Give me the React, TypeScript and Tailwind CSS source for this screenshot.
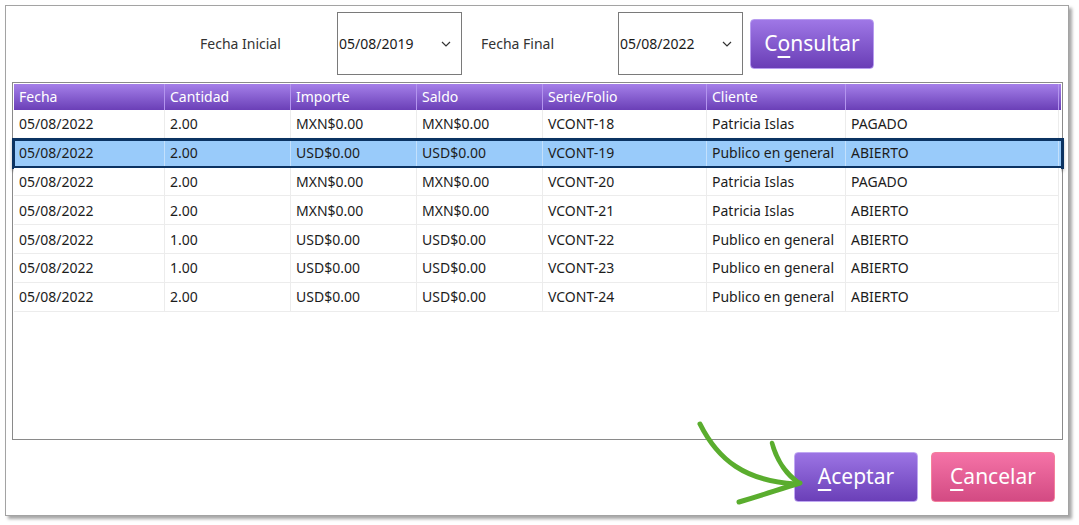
import React from "react";

const columns = [
  { label: "Fecha", w: "w-[151px]" },
  { label: "Cantidad", w: "w-[126px]" },
  { label: "Importe", w: "w-[126px]" },
  { label: "Saldo", w: "w-[126px]" },
  { label: "Serie/Folio", w: "w-[164px]" },
  { label: "Cliente", w: "w-[139px]" },
  { label: "", w: "w-[213px]" },
];

const rows = [
  ["05/08/2022", "2.00", "MXN$0.00", "MXN$0.00", "VCONT-18", "Patricia Islas", "PAGADO"],
  ["05/08/2022", "2.00", "USD$0.00", "USD$0.00", "VCONT-19", "Publico en general", "ABIERTO"],
  ["05/08/2022", "2.00", "MXN$0.00", "MXN$0.00", "VCONT-20", "Patricia Islas", "PAGADO"],
  ["05/08/2022", "2.00", "MXN$0.00", "MXN$0.00", "VCONT-21", "Patricia Islas", "ABIERTO"],
  ["05/08/2022", "1.00", "USD$0.00", "USD$0.00", "VCONT-22", "Publico en general", "ABIERTO"],
  ["05/08/2022", "1.00", "USD$0.00", "USD$0.00", "VCONT-23", "Publico en general", "ABIERTO"],
  ["05/08/2022", "2.00", "USD$0.00", "USD$0.00", "VCONT-24", "Publico en general", "ABIERTO"],
];

const font = { fontFamily: '"Noto Sans", "Open Sans", sans-serif' };

function DateBox({ value }: { value: string }) {
  return (
    <div className="flex h-[63px] w-[125px] items-center justify-between border border-[#7a7a7a] bg-white pl-[1px] pr-[10px] text-[14px] text-[#1a1a1a]">
      <span>{value}</span>
      <svg width="10" height="6" viewBox="0 0 10 6" fill="none">
        <path d="M1 1l4 4 4-4" stroke="#333" strokeWidth="1.2" />
      </svg>
    </div>
  );
}

export default function App() {
  return (
    <div className="relative h-[525px] w-[1079px] bg-white" style={font}>
      {/* window */}
      <div className="ml-[5px] mt-[5px] flex h-[511px] w-[1064px] flex-col border border-[#a3a3a3] bg-white shadow-[3px_3px_3px_rgba(0,0,0,0.35)]">
        {/* filters */}
        <div className="flex items-center pl-[194px] pt-[6px]">
          <span className="w-[137px] text-[14px] text-[#333]">Fecha Inicial</span>
          <DateBox value="05/08/2019" />
          <span className="ml-[19px] w-[137px] text-[14px] text-[#333]">Fecha Final</span>
          <DateBox value="05/08/2022" />
          <button className="ml-[7px] h-[50px] w-[124px] rounded-[4px] border border-[#b79cf0] bg-gradient-to-b from-[#9f77e6] to-[#6a3db6] text-[21px] text-white">
            C<span className="underline underline-offset-[5px]">o</span>nsultar
          </button>
        </div>

        {/* grid */}
        <div className="ml-[6px] mt-[7px] h-[358px] w-[1051px] border border-[#8a8a8a] p-px">
          <div className="flex h-[26px] bg-gradient-to-b from-[#a57fe9] to-[#6b3fb7]">
            {columns.map((c, i) => (
              <div
                key={i}
                className={`${c.w} flex items-center border-r border-[#b395ee] pb-px pl-[5px] text-[14px] text-white`}
              >
                {c.label}
              </div>
            ))}
          </div>
          {rows.map((r, ri) => {
            const selected = ri === 1;
            return (
              <div
                key={ri}
                className={`relative flex h-[28.8px] ${selected ? "bg-[#99cbfa]" : "bg-white"}`}
              >
                {r.map((cell, ci) => (
                  <div
                    key={ci}
                    className={`${columns[ci].w} flex items-center border-b border-r pl-[5px] text-[14px] text-[#1c1c1c] ${
                      selected ? "border-[#c3e0fc]" : "border-[#ececec]"
                    }`}
                  >
                    {cell}
                  </div>
                ))}
                {selected && (
                  <div className="absolute -left-[2px] -right-[3px] -top-[1px] -bottom-[1px] border-[3px] border-[#0b3362] shadow-[0_2px_3px_rgba(0,0,0,0.25)]" />
                )}
              </div>
            );
          })}
        </div>

        {/* actions */}
        <div className="mt-[12px] flex justify-end gap-[13px] pr-[13px]">
          <button className="h-[50px] w-[124px] rounded-[4px] border border-[#c0a8f2] bg-gradient-to-b from-[#9c74e4] to-[#6b3fb8] text-[21px] text-white">
            <span className="underline underline-offset-[5px]">A</span>ceptar
          </button>
          <button className="h-[50px] w-[124px] rounded-[4px] border border-[#f4809c] bg-gradient-to-b from-[#f573a7] to-[#d34a83] text-[21px] text-white">
            <span className="underline underline-offset-[5px]">C</span>ancelar
          </button>
        </div>
      </div>

      {/* annotation arrow */}
      <svg
        className="pointer-events-none absolute left-0 top-0"
        width="1079"
        height="525"
        viewBox="0 0 1079 525"
        fill="none"
      >
        <path
          d="M700 419 C 718 455, 745 476, 796 479"
          stroke="#5aad2e"
          strokeWidth="5"
          strokeLinecap="round"
        />
        <path
          d="M772 438 C 778 458, 786 470, 799 478 C 786 468, 776 455, 772 438"
          stroke="#5aad2e"
          strokeWidth="4.5"
          strokeLinecap="round"
          strokeLinejoin="round"
        />
        <path
          d="M739 497 C 760 491, 780 484, 800 478"
          stroke="#5aad2e"
          strokeWidth="5"
          strokeLinecap="round"
        />
      </svg>
    </div>
  );
}
